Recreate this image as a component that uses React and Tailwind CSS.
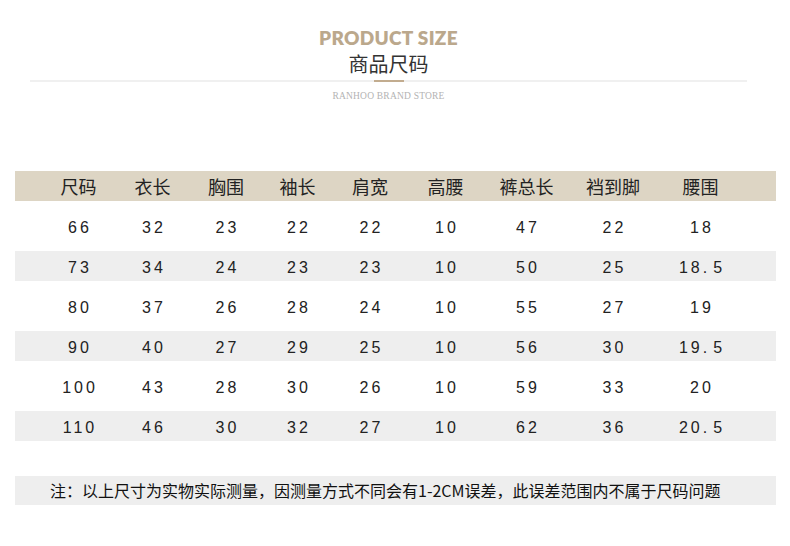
const headers = ["尺码", "衣长", "胸围", "袖长", "肩宽", "高腰", "裤总长", "裆到脚", "腰围"];

const rows = [
  ["66", "32", "23", "22", "22", "10", "47", "22", "18"],
  ["73", "34", "24", "23", "23", "10", "50", "25", "18.5"],
  ["80", "37", "26", "28", "24", "10", "55", "27", "19"],
  ["90", "40", "27", "29", "25", "10", "56", "30", "19.5"],
  ["100", "43", "28", "30", "26", "10", "59", "33", "20"],
  ["110", "46", "30", "32", "27", "10", "62", "36", "20.5"],
];

const cols = "grid grid-cols-[73px_75px_72px_71px_74px_77px_85px_88px_87px] pl-[27px]";

// the dot in decimals sits in a wider cell in the original
const Num = ({ v }) => {
  const [a, b] = v.split(".");
  if (b === undefined) return <span>{v}</span>;
  return (
    <span>
      {a}
      <span className="mr-[3px]">.</span>
      {b}
    </span>
  );
};

export default function App() {
  return (
    <div className="w-[790px] h-[546px] bg-white overflow-hidden font-['Liberation_Sans','Noto_Sans_CJK_SC',sans-serif]">
      {/* title block */}
      <div className="ml-[30px] w-[717px] pt-[27px] flex flex-col items-center">
        <div className="font-['Lato',sans-serif] font-extrabold text-[19px] leading-[22px] tracking-[0.3px] text-[#bba88c]">
          PRODUCT SIZE
        </div>
        <div className="mt-[1px] font-['Noto_Sans_CJK_SC',sans-serif] text-[20px] leading-[28px] text-[#333]">
          商品尺码
        </div>
        <div className="relative mt-[2px] w-full h-[2px] bg-[#f0f0f0]">
          <div className="absolute left-[344px] top-0 w-[30px] h-[2px] bg-[#c2ac8f]" />
        </div>
        <div className="mt-[8px] font-['Liberation_Serif',serif] text-[9.5px] leading-[12px] tracking-[0.2px] text-[#b3b3b3]">
          RANHOO BRAND STORE
        </div>
      </div>

      {/* size table */}
      <div className="mt-[69px] ml-[15px] w-[761px] flex flex-col gap-[10px]">
        <div className={`${cols} h-[30px] items-center bg-[#ddd5c4]`}>
          {headers.map((h) => (
            <div
              key={h}
              className="text-center font-['Noto_Sans_CJK_SC',sans-serif] text-[18px] leading-[30px] text-[#222]"
            >
              {h}
            </div>
          ))}
        </div>
        {rows.map((r, i) => (
          <div
            key={r[0]}
            className={`${cols} h-[30px] items-center ${i % 2 === 1 ? "bg-[#eeeeee]" : "bg-white"}`}
          >
            {r.map((v, j) => (
              <div
                key={j}
                className="text-center text-[16px] leading-[30px] pt-[2px] tracking-[3px] pl-[3px] text-[#222]"
              >
                <Num v={v} />
              </div>
            ))}
          </div>
        ))}
      </div>

      {/* note */}
      <div className="mt-[35px] ml-[15px] w-[761px] h-[29px] bg-[#eeeeee] flex items-center pl-[35px]">
        <span className="font-['Noto_Sans_CJK_SC',sans-serif] text-[16px] leading-[29px] text-[#111]">
          注：以上尺寸为实物实际测量，因测量方式不同会有1-2CM误差，此误差范围内不属于尺码问题
        </span>
      </div>
    </div>
  );
}
